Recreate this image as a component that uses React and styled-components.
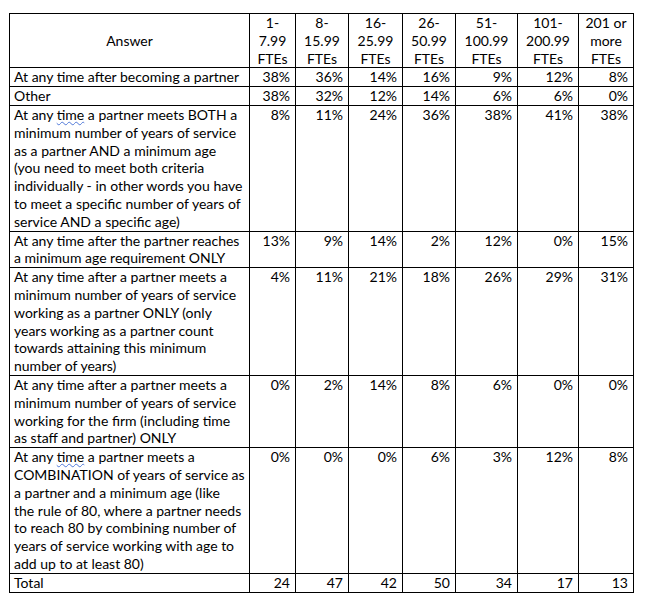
import React from "react";
import styled, { createGlobalStyle } from "styled-components";

const Global = createGlobalStyle`
  html, body { margin: 0; padding: 0; background: #ffffff; }
  body { font-family: Lato, "Liberation Sans", sans-serif; color: #000; }
`;

const Page = styled.div`
  padding: 13px 0 0 9px;
`;

const Table = styled.table`
  border-collapse: collapse;
  table-layout: fixed;
  width: 624px;
  font-size: 14px;
  line-height: 17.8px;
`;

const HeadCell = styled.th`
  border: 1px solid #000;
  font-weight: normal;
  text-align: center;
  vertical-align: middle;
  padding: 0 2px;
  white-space: nowrap;
`;

const AnswerCell = styled.td`
  border: 1px solid #000;
  text-align: left;
  vertical-align: top;
  padding: 0 3px 0 4px;
  white-space: nowrap;
`;

const ValueCell = styled.td`
  border: 1px solid #000;
  text-align: right;
  vertical-align: top;
  padding: 0 5px 0 2px;
  white-space: nowrap;
`;

const Squiggle = styled.span`
  text-decoration: underline wavy #4f78d8;
  text-decoration-thickness: 1px;
  text-underline-offset: 1px;
`;

const widths = [240, 46, 53, 54, 53, 62, 61, 55];

const headers = [
  ["1-", "7.99", "FTEs"],
  ["8-", "15.99", "FTEs"],
  ["16-", "25.99", "FTEs"],
  ["26-", "50.99", "FTEs"],
  ["51-", "100.99", "FTEs"],
  ["101-", "200.99", "FTEs"],
  ["201 or", "more", "FTEs"],
];

const tm = (rest) => (
  <>
    At any <Squiggle>time</Squiggle>
    {rest}
  </>
);

const rows = [
  { lines: ["At any time after becoming a partner"], v: ["38%", "36%", "14%", "16%", "9%", "12%", "8%"] },
  { lines: ["Other"], v: ["38%", "32%", "12%", "14%", "6%", "6%", "0%"] },
  {
    lines: [
      tm(" a partner meets BOTH a"),
      "minimum number of years of service",
      "as a partner AND a minimum age",
      "(you need to meet both criteria",
      "individually - in other words you have",
      "to meet a specific number of years of",
      "service AND a specific age)",
    ],
    v: ["8%", "11%", "24%", "36%", "38%", "41%", "38%"],
  },
  {
    lines: ["At any time after the partner reaches", "a minimum age requirement ONLY"],
    v: ["13%", "9%", "14%", "2%", "12%", "0%", "15%"],
  },
  {
    lines: [
      "At any time after a partner meets a",
      "minimum number of years of service",
      "working as a partner ONLY (only",
      "years working as a partner count",
      "towards attaining this minimum",
      "number of years)",
    ],
    v: ["4%", "11%", "21%", "18%", "26%", "29%", "31%"],
  },
  {
    lines: [
      "At any time after a partner meets a",
      "minimum number of years of service",
      "working for the firm (including time",
      "as staff and partner) ONLY",
    ],
    v: ["0%", "2%", "14%", "8%", "6%", "0%", "0%"],
  },
  {
    lines: [
      tm(" a partner meets a"),
      "COMBINATION of years of service as",
      "a partner and a minimum age (like",
      "the rule of 80, where a partner needs",
      "to reach 80 by combining number of",
      "years of service working with age to",
      "add up to at least 80)",
    ],
    v: ["0%", "0%", "0%", "6%", "3%", "12%", "8%"],
  },
  { lines: ["Total"], v: ["24", "47", "42", "50", "34", "17", "13"] },
];

const Lines = ({ lines }) =>
  lines.map((l, i) => (
    <React.Fragment key={i}>
      {i > 0 && <br />}
      {l}
    </React.Fragment>
  ));

export default function App() {
  return (
    <>
      <Global />
      <Page>
        <Table>
          <colgroup>
            {widths.map((w, i) => (
              <col key={i} style={{ width: w }} />
            ))}
          </colgroup>
          <thead>
            <tr>
              <HeadCell>Answer</HeadCell>
              {headers.map((h, i) => (
                <HeadCell key={i}>
                  <Lines lines={h} />
                </HeadCell>
              ))}
            </tr>
          </thead>
          <tbody>
            {rows.map((r, i) => (
              <tr key={i}>
                <AnswerCell>
                  <Lines lines={r.lines} />
                </AnswerCell>
                {r.v.map((v, j) => (
                  <ValueCell key={j}>{v}</ValueCell>
                ))}
              </tr>
            ))}
          </tbody>
        </Table>
      </Page>
    </>
  );
}
